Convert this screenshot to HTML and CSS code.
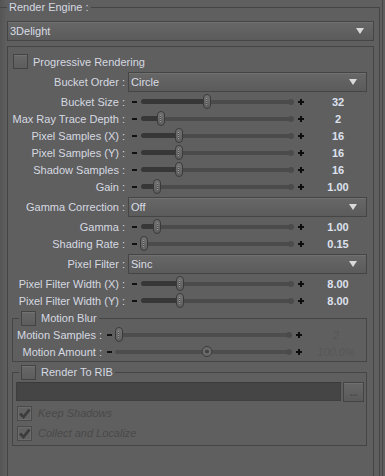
FILE: index.html
```html
<!DOCTYPE html>
<html lang="en">
<head>
    <meta charset="UTF-8">
    <meta name="viewport" content="width=device-width, initial-scale=1.0">
    <title>Render Settings</title>
    <link rel="stylesheet" href="styles.css">
</head>
<body>
<div class="screen">
    <fieldset class="engine">
        <legend>Render Engine :</legend>
        <div class="select top">
            <span>3Delight</span>
            <svg class="arrow" width="8" height="6" viewBox="0 0 8 6"><path d="M0 0H8L4 6Z" fill="#dadada"/></svg>
        </div>

        <div class="opts">
            <div class="check-row">
                <span class="box"></span>Progressive Rendering
            </div>

            <div class="row sel-row">
                <span class="lbl">Bucket Order :</span>
                <div class="select">
                    <span>Circle</span>
                    <svg class="arrow" width="8" height="6" viewBox="0 0 8 6"><path d="M0 0H8L4 6Z" fill="#dadada"/></svg>
                </div>
            </div>

            <div class="row">
                <span class="lbl">Bucket Size :</span>
                <div class="slider">
                    <span class="minus"></span>
                    <span class="track"><span class="fill" style="width:43%"></span><span class="thumb" style="left:43%"></span></span>
                    <span class="plus"></span>
                    <span class="val">32</span>
                </div>
            </div>
            <div class="row">
                <span class="lbl">Max Ray Trace Depth :</span>
                <div class="slider">
                    <span class="minus"></span>
                    <span class="track"><span class="fill" style="width:12.5%"></span><span class="thumb" style="left:12.5%"></span></span>
                    <span class="plus"></span>
                    <span class="val">2</span>
                </div>
            </div>
            <div class="row">
                <span class="lbl">Pixel Samples (X) :</span>
                <div class="slider">
                    <span class="minus"></span>
                    <span class="track"><span class="fill" style="width:24.5%"></span><span class="thumb" style="left:24.5%"></span></span>
                    <span class="plus"></span>
                    <span class="val">16</span>
                </div>
            </div>
            <div class="row">
                <span class="lbl">Pixel Samples (Y) :</span>
                <div class="slider">
                    <span class="minus"></span>
                    <span class="track"><span class="fill" style="width:24.5%"></span><span class="thumb" style="left:24.5%"></span></span>
                    <span class="plus"></span>
                    <span class="val">16</span>
                </div>
            </div>
            <div class="row">
                <span class="lbl">Shadow Samples :</span>
                <div class="slider">
                    <span class="minus"></span>
                    <span class="track"><span class="fill" style="width:24.5%"></span><span class="thumb" style="left:24.5%"></span></span>
                    <span class="plus"></span>
                    <span class="val">16</span>
                </div>
            </div>
            <div class="row">
                <span class="lbl">Gain :</span>
                <div class="slider">
                    <span class="minus"></span>
                    <span class="track"><span class="fill" style="width:10%"></span><span class="thumb" style="left:10%"></span></span>
                    <span class="plus"></span>
                    <span class="val">1.00</span>
                </div>
            </div>

            <div class="row sel-row">
                <span class="lbl">Gamma Correction :</span>
                <div class="select">
                    <span>Off</span>
                    <svg class="arrow" width="8" height="6" viewBox="0 0 8 6"><path d="M0 0H8L4 6Z" fill="#dadada"/></svg>
                </div>
            </div>

            <div class="row">
                <span class="lbl">Gamma :</span>
                <div class="slider">
                    <span class="minus"></span>
                    <span class="track"><span class="fill" style="width:10%"></span><span class="thumb" style="left:10%"></span></span>
                    <span class="plus"></span>
                    <span class="val">1.00</span>
                </div>
            </div>
            <div class="row">
                <span class="lbl">Shading Rate :</span>
                <div class="slider">
                    <span class="minus"></span>
                    <span class="track"><span class="fill" style="width:1%"></span><span class="thumb" style="left:1%"></span></span>
                    <span class="plus"></span>
                    <span class="val">0.15</span>
                </div>
            </div>

            <div class="row sel-row">
                <span class="lbl">Pixel Filter :</span>
                <div class="select">
                    <span>Sinc</span>
                    <svg class="arrow" width="8" height="6" viewBox="0 0 8 6"><path d="M0 0H8L4 6Z" fill="#dadada"/></svg>
                </div>
            </div>

            <div class="row">
                <span class="lbl">Pixel Filter Width (X) :</span>
                <div class="slider">
                    <span class="minus"></span>
                    <span class="track"><span class="fill" style="width:25%"></span><span class="thumb" style="left:25%"></span></span>
                    <span class="plus"></span>
                    <span class="val">8.00</span>
                </div>
            </div>
            <div class="row">
                <span class="lbl">Pixel Filter Width (Y) :</span>
                <div class="slider">
                    <span class="minus"></span>
                    <span class="track"><span class="fill" style="width:25%"></span><span class="thumb" style="left:25%"></span></span>
                    <span class="plus"></span>
                    <span class="val">8.00</span>
                </div>
            </div>

            <!-- motion blur, switched off -->
            <fieldset class="group motion">
                <legend><span class="leg"><span class="box"></span>Motion Blur</span></legend>
                <div class="row m">
                    <span class="lbl">Motion Samples :</span>
                    <div class="slider">
                        <span class="minus"></span>
                        <span class="track"><span class="thumb" style="left:2%"></span></span>
                        <span class="plus"></span>
                        <span class="val off">2</span>
                    </div>
                </div>
                <div class="row m">
                    <span class="lbl">Motion Amount :</span>
                    <div class="slider">
                        <span class="minus"></span>
                        <span class="track plain"><span class="knob" style="left:52%"></span></span>
                        <span class="plus"></span>
                        <span class="val off">100.0%</span>
                    </div>
                </div>
            </fieldset>

            <fieldset class="group rib">
                <legend><span class="leg"><span class="box"></span>Render To RIB</span></legend>
                <div class="field-row">
                    <div class="field"></div>
                    <div class="btn">...</div>
                </div>
                <div class="crow first">
                    <span class="box checked"><svg width="13" height="13" viewBox="0 0 13 13"><path d="M2 6.5L5.5 10L11.5 2.5" fill="none" stroke="#3c3c3c" stroke-width="2.8"/></svg></span>
                    <span class="dim">Keep Shadows</span>
                </div>
                <div class="crow">
                    <span class="box checked"><svg width="13" height="13" viewBox="0 0 13 13"><path d="M2 6.5L5.5 10L11.5 2.5" fill="none" stroke="#3c3c3c" stroke-width="2.8"/></svg></span>
                    <span class="dim">Collect and Localize</span>
                </div>
            </fieldset>
        </div>
    </fieldset>
</div>
</body>
</html>
```

FILE: styles.css
```css
body {
    margin: 0;
    background-color: #5f5f5f;
    font-family: "Liberation Sans", Arial, sans-serif;
    font-size: 11px;
    color: #d6d9e1;
    overflow: hidden;
}

.screen {
    width: 382px;
    height: 476px;
    overflow: hidden;
    border-right: 1px solid #464646;
    background: linear-gradient(to right, #555 0, #5f5f5f 7px);
}

fieldset {
    margin: 0;
    min-width: 0;
    border: 1px solid #454545;
}
legend {
    padding: 0 2px;
    line-height: 15px;
}

.engine {
    width: 380px;
    box-sizing: border-box;
    min-height: 540px;
    border-left: none;
    padding: 6px 5px 0 7px;
}

/* drop downs */
.select {
    height: 20px;
    box-sizing: border-box;
    display: flex;
    align-items: center;
    justify-content: space-between;
    padding: 0 9px 0 2px;
    border: 1px solid #454545;
    background: linear-gradient(#676767, #5b5b5b);
    box-shadow: inset 0 1px 0 #707070;
    color: #dadde5;
}
.arrow {
    display: block;
}

.opts {
    margin-top: 5px;
    min-height: 520px;
    border: 1px solid #454545;
    padding: 6px 6px 0 0;
}

.box {
    width: 15px;
    height: 15px;
    box-sizing: border-box;
    flex: none;
    border: 1px solid #434343;
    background: linear-gradient(#686868, #5d5d5d);
    box-shadow: inset 0 1px 0 #727272;
}
.box.checked {
    border-color: #4a4a4a;
    background: #626262;
    box-shadow: inset 0 0 0 1px #6b6b6b;
    display: flex;
    align-items: center;
    justify-content: center;
}
.box.checked svg {
    display: block;
}

.check-row {
    height: 17px;
    display: flex;
    align-items: center;
    gap: 5px;
    padding-left: 5px;
}

.row {
    height: 17px;
    display: flex;
    align-items: center;
}
.row.sel-row {
    height: 20px;
    margin: 2px 0 1px;
}
.row .select {
    flex: 1;
}
.lbl {
    width: 117px;
    flex: none;
    margin-right: 3px;
    text-align: right;
    white-space: nowrap;
}

/* sliders */
.slider {
    flex: 1;
    display: flex;
    align-items: center;
    padding-right: 9px;
}
.minus {
    width: 5px;
    height: 2px;
    margin-left: 4px;
    background-color: #111;
    flex: none;
}
.track {
    flex: 1;
    height: 4px;
    margin-left: 5px;
    position: relative;
    border-radius: 2px;
    background-color: #4b4b4b;
}
.track::after {
    content: "";
    position: absolute;
    right: -1px;
    top: -1px;
    width: 6px;
    height: 6px;
    border-radius: 3px;
    background-color: #4b4b4b;
}
.fill {
    position: absolute;
    left: -1px;
    top: -0.5px;
    height: 5px;
    border-radius: 3px;
    background-color: #373737;
}
.thumb {
    position: absolute;
    top: -6px;
    width: 8px;
    height: 15px;
    box-sizing: border-box;
    transform: translateX(-50%);
    border: 1px solid #3a3a3a;
    border-radius: 4px;
    background: linear-gradient(#717171, #5f5f5f);
    z-index: 1;
}
.thumb::after {
    content: "";
    position: absolute;
    left: 2.5px;
    top: 3px;
    width: 1px;
    height: 7px;
    background: repeating-linear-gradient(#999 0 1px, #4c4c4c 1px 2px);
}
.knob {
    position: absolute;
    top: -4px;
    width: 11px;
    height: 11px;
    box-sizing: border-box;
    transform: translateX(-50%);
    border: 1px solid #3b3b3b;
    border-radius: 50%;
    background: radial-gradient(circle, #424242 0 1.6px, #6a6a6a 2.2px);
}
.plus {
    width: 6px;
    height: 6px;
    margin-left: 5px;
    position: relative;
    flex: none;
}
.plus::before,
.plus::after {
    content: "";
    position: absolute;
    background-color: #0d0d0d;
}
.plus::before {
    left: 0;
    top: 2px;
    width: 6px;
    height: 2px;
}
.plus::after {
    left: 2px;
    top: 0;
    width: 2px;
    height: 6px;
}
.val {
    width: 40px;
    margin-left: 14px;
    flex: none;
    text-align: center;
    font-weight: bold;
    color: #dde1ee;
}
.val.off {
    font-weight: normal;
    font-style: italic;
    color: #575757;
}

/* sub groups */
.group {
    margin: 2px 0 0 4px;
    padding: 0 0 1px 0;
}
.group legend {
    margin-left: 6px;
}
.leg {
    display: flex;
    align-items: center;
    gap: 5px;
    height: 15px;
}

.row.m .lbl {
    width: 89px;
    margin-right: 0;
}
.row.m .slider {
    padding-right: 10px;
}
.row.m .minus {
    margin-left: 5px;
}
.row.m .track {
    margin-left: 3px;
    background-color: #4d4d4d;
}

.rib {
    margin-top: 3px;
    padding: 0 2px 2px 3px;
}
.rib legend {
    margin-left: 3px;
}
.field-row {
    display: flex;
    align-items: flex-start;
    gap: 2px;
    margin-top: 2px;
}
.field {
    flex: 1;
    height: 19px;
    box-sizing: border-box;
    border: 1px solid #3f3f3f;
    border-top-color: #3a3a3a;
    background-color: #454545;
}
.btn {
    width: 21px;
    height: 20px;
    box-sizing: border-box;
    border: 1px solid #444;
    background: linear-gradient(#676767, #5a5a5a);
    box-shadow: inset 0 1px 0 #717171;
    color: #444;
    font-size: 9px;
    font-weight: bold;
    text-align: center;
    line-height: 20px;
}
.crow {
    height: 20px;
    display: flex;
    align-items: center;
    gap: 6px;
    padding-left: 1px;
}
.crow.first {
    margin-top: 1px;
}
.dim {
    font-style: italic;
    color: #4a4a4a;
}
```
